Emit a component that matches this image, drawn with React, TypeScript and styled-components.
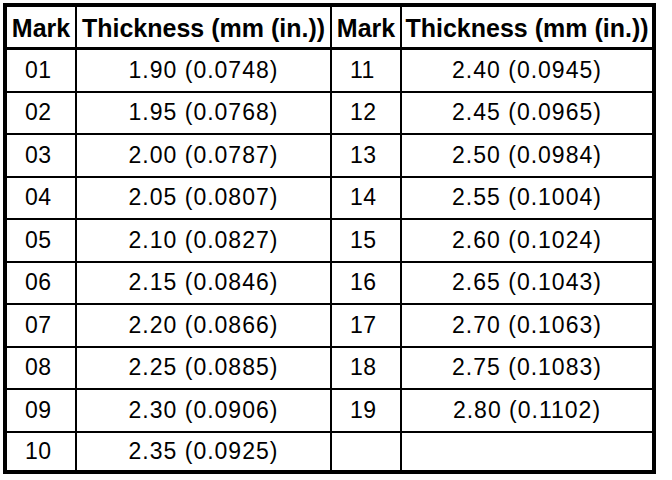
import styled, { createGlobalStyle } from "styled-components";

interface Shim {
  mark: string;
  thickness: string;
}

const leftShims: Shim[] = [
  { mark: "01", thickness: "1.90 (0.0748)" },
  { mark: "02", thickness: "1.95 (0.0768)" },
  { mark: "03", thickness: "2.00 (0.0787)" },
  { mark: "04", thickness: "2.05 (0.0807)" },
  { mark: "05", thickness: "2.10 (0.0827)" },
  { mark: "06", thickness: "2.15 (0.0846)" },
  { mark: "07", thickness: "2.20 (0.0866)" },
  { mark: "08", thickness: "2.25 (0.0885)" },
  { mark: "09", thickness: "2.30 (0.0906)" },
  { mark: "10", thickness: "2.35 (0.0925)" },
];

const rightShims: Shim[] = [
  { mark: "11", thickness: "2.40 (0.0945)" },
  { mark: "12", thickness: "2.45 (0.0965)" },
  { mark: "13", thickness: "2.50 (0.0984)" },
  { mark: "14", thickness: "2.55 (0.1004)" },
  { mark: "15", thickness: "2.60 (0.1024)" },
  { mark: "16", thickness: "2.65 (0.1043)" },
  { mark: "17", thickness: "2.70 (0.1063)" },
  { mark: "18", thickness: "2.75 (0.1083)" },
  { mark: "19", thickness: "2.80 (0.1102)" },
];

const GlobalStyle = createGlobalStyle`
  html, body {
    margin: 0;
    padding: 0;
    background: #ffffff;
  }

  body {
    font-family: "Liberation Sans", Arial, Helvetica, sans-serif;
    color: #000000;
  }
`;

const Page = styled.div`
  padding: 3px;
`;

const Grid = styled.div`
  box-sizing: border-box;
  width: 653px;
  height: 471px;
  display: grid;
  grid-template-columns: 68px 253px 68px 250px;
  grid-template-rows: 41px repeat(9, 40.5px) 1fr;
  gap: 2px;
  padding: 4px;
  background: #000000;
`;

const Cell = styled.div`
  display: flex;
  align-items: center;
  background: #ffffff;
  white-space: nowrap;
`;

const HeadCell = styled(Cell)`
  justify-content: center;
  margin-bottom: 1px;
  font-size: 25px;
  font-weight: 700;
  padding-top: 2px;
`;

const MarkCell = styled(Cell)`
  justify-content: flex-start;
  padding-left: 18px;
  font-size: 23px;
  letter-spacing: 0.5px;
`;

const ValueCell = styled(Cell)`
  justify-content: center;
  font-size: 23px;
  letter-spacing: 1px;
`;

export default function App() {
  return (
    <>
      <GlobalStyle />
      <Page>
        <Grid>
          <HeadCell>Mark</HeadCell>
          <HeadCell>Thickness (mm (in.))</HeadCell>
          <HeadCell>Mark</HeadCell>
          <HeadCell>Thickness (mm (in.))</HeadCell>
          {leftShims.map((left, i) => {
            const right = rightShims[i];
            return [
              <MarkCell key={`lm${i}`}>{left.mark}</MarkCell>,
              <ValueCell key={`lt${i}`}>{left.thickness}</ValueCell>,
              <MarkCell key={`rm${i}`}>{right ? right.mark : ""}</MarkCell>,
              <ValueCell key={`rt${i}`}>{right ? right.thickness : ""}</ValueCell>,
            ];
          })}
        </Grid>
      </Page>
    </>
  );
}
